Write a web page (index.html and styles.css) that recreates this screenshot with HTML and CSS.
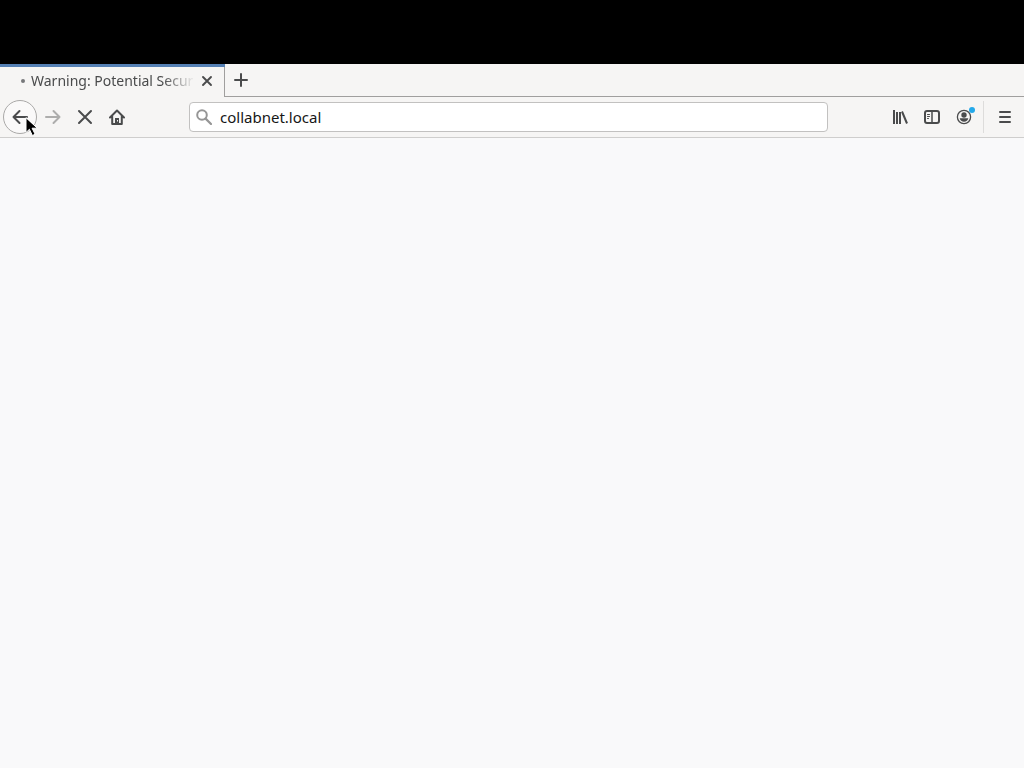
FILE: index.html
```html
<!DOCTYPE html>
<html lang="en">
<head>
<meta charset="utf-8">
<meta name="viewport" content="width=device-width, initial-scale=1">
<title>Browser</title>
<link rel="stylesheet" href="styles.css">
</head>
<body>
<div class="desktop-bar"></div>
<header class="chrome">
  <div class="tab-strip">
    <div class="tab">
      <span class="busy-dot"></span>
      <span class="tab-title">Warning: Potential Secur</span>
      <button class="tab-close" type="button" aria-label="Close tab">
        <svg width="16" height="16" viewBox="0 0 16 16"><path d="M4 4l8 8M12 4l-8 8" stroke-width="1.900"/></svg>
      </button>
    </div>
    <button class="new-tab" type="button" aria-label="New tab">
      <svg width="16" height="16" viewBox="0 0 16 16"><path d="M8 2v12M2 8h12" stroke-width="2"/></svg>
    </button>
  </div>
  <div class="toolbar">
    <button class="back" type="button" aria-label="Back">
      <svg width="16" height="16" viewBox="0 0 16 16"><path d="M15 8H1.500M7.500 2L1.500 8l6 6" stroke-width="2"/></svg>
      <svg class="pointer" width="14" height="20" viewBox="0 0 14 20"><path d="M1 1v14.500l3.400-3.200 3 6.200 2.700-1.300-3-6H12z"/></svg>
    </button>
    <button class="tool" type="button" aria-label="Forward" disabled>
      <svg width="16" height="16" viewBox="0 0 16 16"><path d="M1 8h13.500M8.500 2l6 6-6 6" stroke-width="2"/></svg>
    </button>
    <button class="tool" type="button" aria-label="Stop">
      <svg width="16" height="16" viewBox="0 0 16 16"><path d="M2 2l12 12M14 2L2 14" stroke-width="2"/></svg>
    </button>
    <button class="tool" type="button" aria-label="Home">
      <svg width="16" height="16" viewBox="0 0 16 16"><path d="M1 8.500L8 1.500l7 7M3.200 7.500V15h9.600V7.500" stroke-width="2"/><path class="solid" d="M6 9h4v6H6z"/><path class="hole" d="M8 11h1v1.500H8z"/></svg>
    </button>
    <div class="address">
      <svg width="16" height="16" viewBox="0 0 16 16"><circle cx="6" cy="6" r="4.800" stroke-width="2"/><path d="M9.600 9.600l5.400 5.400" stroke-width="2.200"/></svg>
      <input class="address-input" type="text" value="collabnet.local" aria-label="Address" spellcheck="false">
    </div>
    <div class="actions">
      <button class="tool" type="button" aria-label="Library">
        <svg class="butt" width="16" height="16" viewBox="0 0 16 16"><path d="M2 1v14M5 3v12M8 3v12M10 2.500L15 14.500" stroke-width="2"/></svg>
      </button>
      <button class="tool" type="button" aria-label="Sidebars">
        <svg width="16" height="16" viewBox="0 0 16 16"><rect x="1" y="2" width="14" height="12" rx="2" stroke-width="2"/><path d="M8 2v12" stroke-width="1.500"/><path d="M3.500 5.500h2M3.500 7.500h2M3.500 9.500h1" stroke-width="1"/></svg>
      </button>
      <button class="tool account" type="button" aria-label="Account">
        <svg width="16" height="16" viewBox="0 0 16 16"><circle cx="8" cy="8" r="6.600" stroke-width="1.300"/><circle class="solid" cx="8" cy="6" r="2.700"/><path class="solid" d="M3.700 9.300h8.600c-.4 2-2.200 3.400-4.300 3.400s-3.900-1.400-4.300-3.400z"/></svg>
        <span class="badge"></span>
      </button>
    </div>
    <button class="menu" type="button" aria-label="Open menu">
      <svg width="16" height="16" viewBox="0 0 16 16"><path d="M3 3h10M3 8h10M3 13h10" stroke-width="2"/></svg>
    </button>
  </div>
</header>
<main class="page"></main>
</body>
</html>
```
FILE: styles.css
```css
* { box-sizing: border-box; }
body {
  margin: 0;
  min-height: 100vh;
  display: flex;
  flex-direction: column;
  background: #f9f9fa;
  color: #4a4b4c;
  font-family: "Noto Sans", sans-serif;
  font-size: 15px;
}
button {
  display: flex;
  align-items: center;
  justify-content: center;
  flex: none;
  padding: 0;
  border: 0;
  background: transparent;
  color: inherit;
}
svg { display: block; flex: none; fill: none; stroke: currentColor; stroke-linejoin: round; stroke-linecap: round; }
.butt { stroke-linecap: butt; }
.solid { fill: currentColor; stroke: none; }
.hole { fill: #f6f5f4; stroke: none; }
.desktop-bar { height: 64px; background: #000; }
.tab-strip {
  display: flex;
  height: 33px;
  background: #f6f5f4;
  box-shadow: inset 0 -1px #a09f9e;
}
.tab {
  display: flex;
  align-items: center;
  width: 225px;
  padding: 0 10px 0 21px;
  background: #f6f5f4;
  box-shadow: inset 0 3px #5580b4, inset -1px 0 #a09f9e;
}
.busy-dot { flex: none; width: 4px; height: 4px; margin-right: 6px; border-radius: 50%; background: #77787a; }
.tab-title {
  flex: 1;
  min-width: 0;
  white-space: nowrap;
  font-size: 14px;
  line-height: 24px;
  -webkit-mask-image: linear-gradient(to left, transparent, #000 32px);
  mask-image: linear-gradient(to left, transparent, #000 32px);
}
.tab-close { width: 16px; height: 24px; margin-left: 4px; }
.new-tab { width: 32px; height: 32px; }
.toolbar {
  display: flex;
  align-items: center;
  height: 41px;
  padding-left: 3px;
  border-bottom: 1px solid #cfcecd;
  background: #f6f5f4;
}
.tool { width: 32px; height: 32px; }
.tool:disabled { color: #adadac; }
.back {
  position: relative;
  width: 34px;
  height: 34px;
  border: 1px solid #aaa9a8;
  border-radius: 50%;
  background: #faf9f9;
}
.pointer { position: absolute; left: 21px; top: 16px; fill: #000; stroke: #fff; stroke-width: 1; }
.address {
  display: flex;
  align-items: center;
  flex: 1;
  height: 30px;
  margin: 0 56px;
  padding: 0 6px;
  border: 1px solid #c2c1c0;
  border-radius: 4px;
  background: #fff;
  color: #969696;
}
.address-input {
  flex: 1;
  min-width: 0;
  padding: 0 0 0 8px;
  border: 0;
  outline: 0;
  background: transparent;
  color: #161616;
  font: inherit;
}
.actions { display: flex; }
.account { position: relative; }
.badge { position: absolute; top: 6px; right: 5px; width: 6px; height: 6px; border-radius: 50%; background: #24a9ea; }
.menu { width: 41px; height: 32px; margin-left: 3px; padding-left: 2px; border-left: 1px solid #dddcdb; }
.page { flex: 1; background: #f9f9fa; }
```
